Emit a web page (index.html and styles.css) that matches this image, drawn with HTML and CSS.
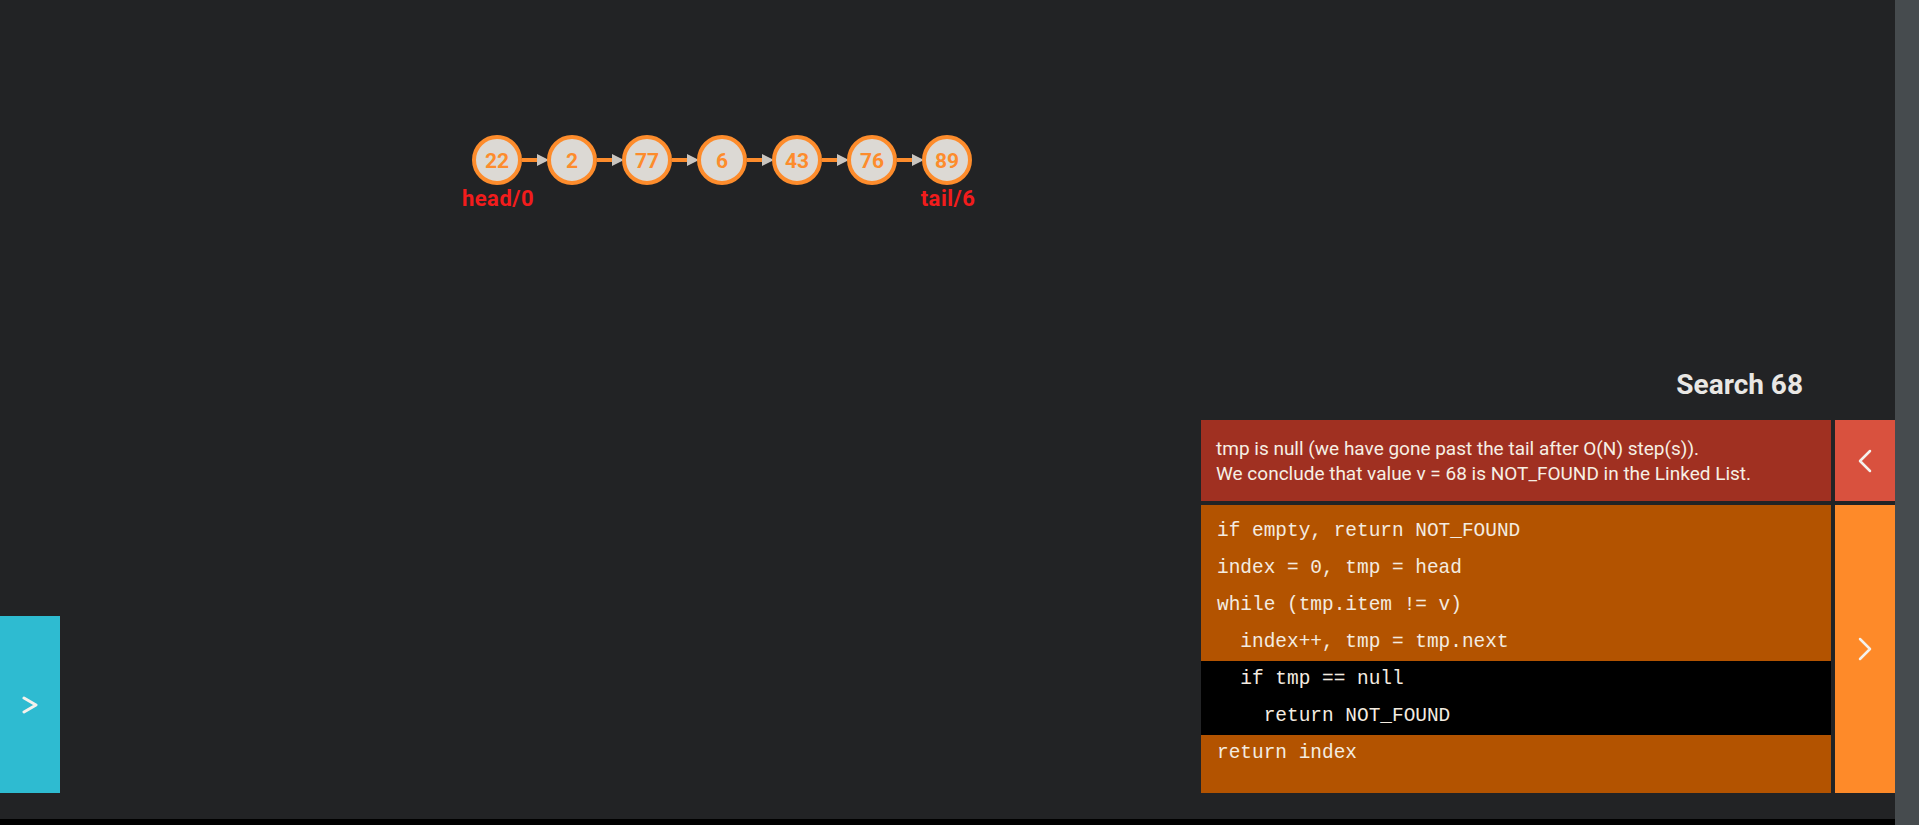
FILE: index.html
```html
<!DOCTYPE html>
<html>
<head>
<meta charset="utf-8">
<title>Linked List - Search</title>
<link rel="stylesheet" href="styles.css">
</head>
<body>
<div class="app">
  <div class="main">
    <div class="stage">
      <svg class="diagram" width="1000" height="230" viewBox="0 0 1000 230">
        <g class="edges">
          <line x1="522" y1="160" x2="538" y2="160"/><polygon points="537,154 549,160 537,166"/>
          <line x1="597" y1="160" x2="613" y2="160"/><polygon points="612,154 624,160 612,166"/>
          <line x1="672" y1="160" x2="688" y2="160"/><polygon points="687,154 699,160 687,166"/>
          <line x1="747" y1="160" x2="763" y2="160"/><polygon points="762,154 774,160 762,166"/>
          <line x1="822" y1="160" x2="838" y2="160"/><polygon points="837,154 849,160 837,166"/>
          <line x1="897" y1="160" x2="913" y2="160"/><polygon points="912,154 924,160 912,166"/>
        </g>
        <g class="nodes">
          <circle cx="497" cy="160" r="23"/><text x="497" y="167.5">22</text>
          <circle cx="572" cy="160" r="23"/><text x="572" y="167.5">2</text>
          <circle cx="647" cy="160" r="23"/><text x="647" y="167.5">77</text>
          <circle cx="722" cy="160" r="23"/><text x="722" y="167.5">6</text>
          <circle cx="797" cy="160" r="23"/><text x="797" y="167.5">43</text>
          <circle cx="872" cy="160" r="23"/><text x="872" y="167.5">76</text>
          <circle cx="947" cy="160" r="23"/><text x="947" y="167.5">89</text>
        </g>
        <text class="label" x="498" y="206">head/0</text>
        <text class="label" x="948" y="206">tail/6</text>
      </svg>
      <div class="bottom-row">
        <button class="side-toggle" aria-label="open">
          <svg width="16" height="18" viewBox="0 0 16 18"><polyline points="2,2 14,9 2,16"/></svg>
        </button>
        <div class="panel-group">
          <div class="title">Search 68</div>
          <div class="status-row">
            <div class="status">tmp is null (we have gone past the tail after O(N) step(s)).<br>We conclude that value v = 68 is NOT_FOUND in the Linked List.</div>
            <button class="btn btn-back" aria-label="back">
              <svg width="14" height="24" viewBox="0 0 14 24"><polyline points="12,2 2,12 12,22"/></svg>
            </button>
          </div>
          <div class="code-row">
            <div class="code">
              <div class="code-line">if empty, return NOT_FOUND</div>
              <div class="code-line">index = 0, tmp = head</div>
              <div class="code-line">while (tmp.item != v)</div>
              <div class="code-line">  index++, tmp = tmp.next</div>
              <div class="code-line active">  if tmp == null</div>
              <div class="code-line active">    return NOT_FOUND</div>
              <div class="code-line">return index</div>
            </div>
            <button class="btn btn-next" aria-label="next">
              <svg width="14" height="24" viewBox="0 0 14 24"><polyline points="2,2 12,12 2,22"/></svg>
            </button>
          </div>
        </div>
      </div>
    </div>
    <div class="footer-bar"></div>
  </div>
  <div class="scroll-track"></div>
</div>
</body>
</html>
```

FILE: styles.css
```css
* { box-sizing: border-box; }

html, body {
  margin: 0;
  padding: 0;
  height: 100%;
  background: #222325;
  overflow: hidden;
}

body {
  font-family: Roboto, "Noto Sans", "Liberation Sans", sans-serif;
}

.app {
  display: flex;
  width: 1919px;
  height: 825px;
}

.main {
  flex: 1;
  display: flex;
  flex-direction: column;
}

.stage {
  flex: 1;
  display: flex;
  flex-direction: column;
  padding-bottom: 26px;
}

.diagram {
  display: block;
}

.edges line {
  stroke: #fd8c2c;
  stroke-width: 4;
}

.edges polygon {
  fill: #c9c5c0;
}

.nodes circle {
  fill: #dcd9d4;
  stroke: #fd8c2c;
  stroke-width: 4;
}

.nodes text {
  fill: #fd8c2c;
  font-family: Roboto, "Liberation Sans", sans-serif;
  font-weight: 700;
  font-size: 21px;
  text-anchor: middle;
}

.label {
  fill: #f21c1c;
  font-family: Roboto, "Liberation Sans", sans-serif;
  font-weight: 700;
  font-size: 22px;
  text-anchor: middle;
  letter-spacing: 0.5px;
}

.bottom-row {
  margin-top: auto;
  display: flex;
  justify-content: space-between;
  align-items: flex-end;
}

button {
  border: 0;
  padding: 0;
  margin: 0;
  cursor: pointer;
  display: flex;
  align-items: center;
  justify-content: center;
}

button polyline {
  fill: none;
  stroke: #f4f1ec;
  stroke-linecap: round;
  stroke-linejoin: round;
}

.side-toggle {
  width: 60px;
  height: 177px;
  background: #2ebbd1;
}

.side-toggle polyline {
  stroke-width: 3;
}

.panel-group {
  width: 694px;
  display: flex;
  flex-direction: column;
}

.title {
  color: #e9e7e4;
  font-weight: 700;
  font-size: 28px;
  line-height: 34px;
  text-align: right;
  padding-right: 92px;
  margin-bottom: 18px;
}

.status-row,
.code-row {
  display: flex;
  gap: 4px;
}

.code-row {
  margin-top: 4px;
}

.status {
  width: 630px;
  height: 81px;
  background: #a03021;
  color: #f6efe4;
  font-size: 19px;
  line-height: 24.5px;
  padding: 17px 15px 0;
}

.btn {
  width: 60px;
}

.btn polyline {
  stroke-width: 2.5;
}

.btn-back {
  background: #d9513e;
}

.btn-next {
  background: #fe8a29;
}

.code {
  width: 630px;
  height: 288px;
  background: #b35300;
  padding-top: 8px;
  font-family: "Liberation Mono", "Courier New", monospace;
  font-size: 19.45px;
  color: #f4ece0;
}

.code-line {
  height: 37px;
  line-height: 37px;
  padding-left: 16px;
  white-space: pre;
}

.code-line.active {
  background: #000000;
}

.footer-bar {
  height: 6px;
  background: #000000;
}

.scroll-track {
  width: 24px;
  background: #464b4e;
}
```
